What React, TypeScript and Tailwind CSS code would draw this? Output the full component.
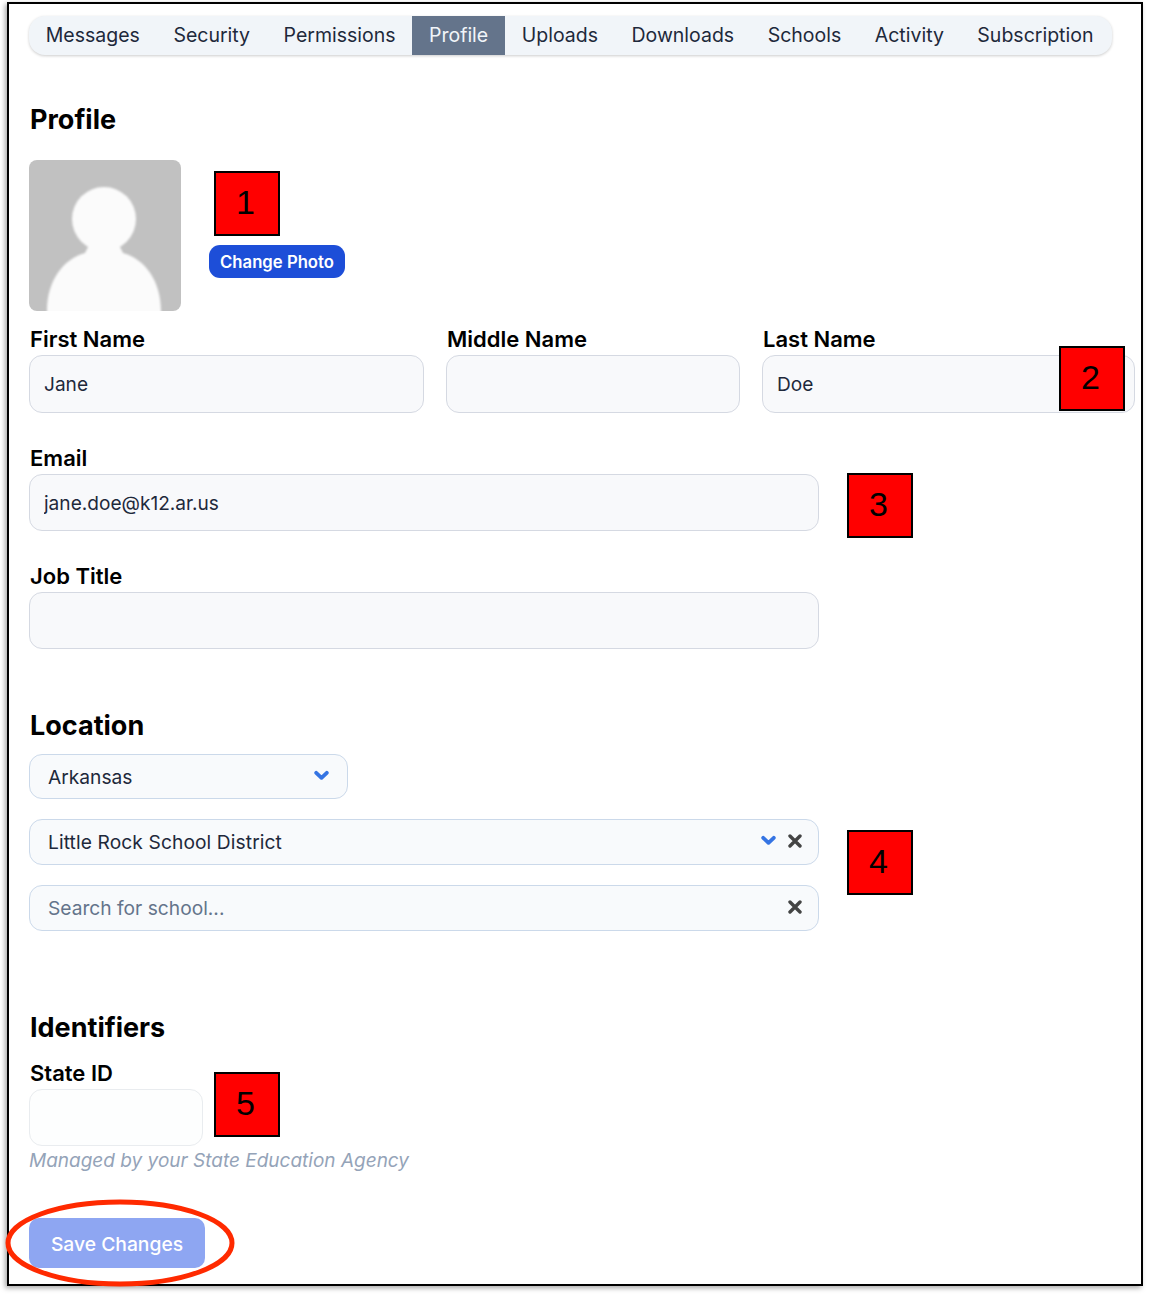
const TABS = ['Messages', 'Security', 'Permissions', 'Profile', 'Uploads', 'Downloads', 'Schools', 'Activity', 'Subscription'];

const INPUT = 'block rounded-[13px] border border-[#d5d9e2] bg-[#f8f9fb] px-[14px] text-[19.1px] text-[#1e293b] outline-none';
const PILL = 'flex items-center rounded-[13px] border border-[#cbd9ea] bg-[#f8fafc] pl-[18px] text-[19.2px] text-[#1e293b]';

const Label = ({text}: {text: string}) => <div className="pl-px text-[22px] leading-[26px] font-semibold text-black">{text}</div>;

const Heading = ({text}: {text: string}) => <h2 className="pl-px text-[27px] leading-[34px] font-bold text-black">{text}</h2>;

const Chevron = () => (
  <svg className="mb-[4px] block" fill="none" height="11" viewBox="0 0 15 11" width="15">
    <path d="M2.2 2.8 7.5 7.8 12.8 2.8" stroke="#3574e3" strokeLinecap="round" strokeLinejoin="round" strokeWidth="3.8" />
  </svg>
);

const Cross = () => (
  <svg className="mb-[4px] block" fill="none" height="14" viewBox="0 0 14 14" width="14">
    <path d="M2 2 12 12M12 2 2 12" stroke="#444" strokeLinecap="round" strokeWidth="3.4" />
  </svg>
);

const Marker = ({className, text}: {className: string; text: string}) => (
  <div
    className={`absolute flex h-[65px] w-[66px] items-center justify-center border-2 border-black bg-[#ff0000] pr-[3px] pb-[2px] font-['Liberation_Sans',sans-serif] text-[34px] text-black ${className}`}
  >
    {text}
  </div>
);

const Avatar = () => (
  <svg className="block rounded-[8px]" height="151" viewBox="0 0 152 151" width="152">
    <defs>
      <filter id="soft">
        <feGaussianBlur stdDeviation="1.2" />
      </filter>
    </defs>
    <rect fill="#c1c1c1" height="151" width="152" />
    <g fill="#fbfbfb" filter="url(#soft)">
      <circle cx="75" cy="59" r="32" />
      <path d="M60 85h30l4 8c22 6 38 28 38 58v10H18v-10c0-30 16-52 38-58z" />
    </g>
  </svg>
);

export default function App() {
  return (
    <div className="h-[1298px] w-[1150px] overflow-hidden bg-white pt-[2px] pl-[7px] font-[Inter,sans-serif]">
      <div className="relative h-[1284px] w-[1136px] border-2 border-black bg-white pt-[12px] pl-[20px] shadow-[-2px_2px_5px_rgba(0,0,0,0.35)]">
        <nav className="flex h-[39px] w-[1083px] overflow-hidden rounded-[16px] bg-[#f1f5f9] shadow-[0_1px_3px_rgba(0,0,0,0.2)]">
          {TABS.map(tab => (
            <div
              className={`flex items-center px-[16.75px] text-[19.5px] ${tab === 'Profile' ? 'bg-[#64748b] text-[#f1f5f9]' : 'text-[#1e293b]'}`}
              key={tab}
            >
              {tab}
            </div>
          ))}
        </nav>

        <section className="mt-[48px]">
          <Heading text="Profile" />
          <div className="mt-[23px] flex">
            <Avatar />
            <div className="ml-[28px] pt-[85px]">
              <button className="h-[33px] w-[136px] rounded-[11px] bg-[#1d4ed8] pt-[3px] text-[16.7px] font-semibold text-white" type="button">
                Change Photo
              </button>
            </div>
          </div>
        </section>

        <div className="mt-[15px] flex gap-[22px]">
          <div className="w-[395px]">
            <Label text="First Name" />
            <input className={`${INPUT} mt-[3px] h-[58px] w-full`} defaultValue="Jane" />
          </div>
          <div className="w-[294px]">
            <Label text="Middle Name" />
            <input className={`${INPUT} mt-[3px] h-[58px] w-full`} />
          </div>
          <div className="w-[373px]">
            <Label text="Last Name" />
            <input className={`${INPUT} mt-[3px] h-[58px] w-full`} defaultValue="Doe" />
          </div>
        </div>

        <div className="mt-[32px] w-[790px]">
          <Label text="Email" />
          <input className={`${INPUT} mt-[3px] h-[57px] w-full`} defaultValue="jane.doe@k12.ar.us" />
        </div>
        <div className="mt-[32px] w-[790px]">
          <Label text="Job Title" />
          <input className={`${INPUT} mt-[3px] h-[57px] w-full`} />
        </div>

        <section className="mt-[60px]">
          <Heading text="Location" />
          <div className="mt-[11px] flex w-[790px] flex-col gap-[20px]">
            <div className={`${PILL} h-[45px] w-[319px] justify-between pt-[2px] pr-[18px]`}>
              Arkansas
              <Chevron />
            </div>
            <div className={`${PILL} h-[46px] justify-between pt-px pr-[16px] tracking-[0.1px]`}>
              Little Rock School District
              <div className="flex items-center gap-[12px]">
                <Chevron />
                <Cross />
              </div>
            </div>
            <div className={`${PILL} h-[46px] justify-between pt-px pr-[16px] text-[#64748b]`}>
              Search for school...
              <Cross />
            </div>
          </div>
        </section>

        <section className="mt-[80px]">
          <Heading text="Identifiers" />
          <div className="mt-[15px]">
            <Label text="State ID" />
            <input className="mt-[3px] block h-[57px] w-[174px] rounded-[13px] border border-[#e9ecef] bg-[#fdfefe] outline-none" disabled />
            <p className="mt-[2px] text-[19px] leading-[26px] text-[#94a3b8] italic">Managed by your State Education Agency</p>
          </div>
        </section>

        <button className="mt-[44px] block h-[50px] w-[176px] rounded-[10px] bg-[#8ea6f2] pt-[2px] text-[19.3px] font-medium text-white" type="button">
          Save Changes
        </button>

        <Marker className="top-[167px] left-[205px]" text="1" />
        <Marker className="top-[342px] left-[1050px]" text="2" />
        <Marker className="top-[469px] left-[838px]" text="3" />
        <Marker className="top-[826px] left-[838px]" text="4" />
        <Marker className="top-[1068px] left-[205px]" text="5" />

        <svg className="pointer-events-none absolute top-[1194px] left-[-4px]" fill="none" height="90" viewBox="0 0 232 90" width="232">
          <ellipse cx="115" cy="45" rx="112" ry="41" stroke="#ff2a00" strokeWidth="5" />
        </svg>
      </div>
    </div>
  );
}
